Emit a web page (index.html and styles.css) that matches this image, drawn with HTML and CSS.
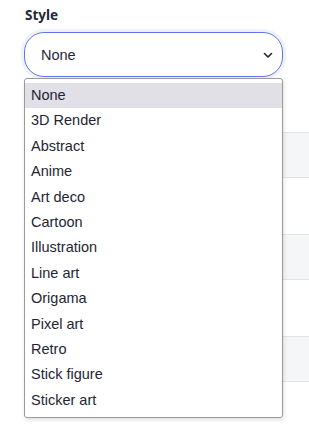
FILE: index.html
```html
<!DOCTYPE html>
<html>
<head>
<meta charset="utf-8">
<link rel="stylesheet" href="styles.css">
</head>
<body>
<div class="page">
  <label class="label">Style</label>
  <div class="field">
    <div class="select">
      <span class="value">None</span>
      <svg class="chev" width="10" height="7" viewBox="0 0 10 7"><path d="M1.5 1.5 L5 5 L8.5 1.5" fill="none" stroke="#1f2937" stroke-width="1.6" stroke-linecap="round" stroke-linejoin="round"/></svg>
    </div>
    <ul class="menu">
      <li class="opt active">None</li>
      <li class="opt">3D Render</li>
      <li class="opt">Abstract</li>
      <li class="opt">Anime</li>
      <li class="opt">Art deco</li>
      <li class="opt">Cartoon</li>
      <li class="opt">Illustration</li>
      <li class="opt">Line art</li>
      <li class="opt">Origama</li>
      <li class="opt">Pixel art</li>
      <li class="opt">Retro</li>
      <li class="opt">Stick figure</li>
      <li class="opt">Sticker art</li>
    </ul>
  </div>
  <div class="cards">
    <div class="card"></div>
    <div class="card"></div>
    <div class="card"></div>
  </div>
</div>
</body>
</html>
```
FILE: styles.css
```css
html, body {
  margin: 0;
  padding: 0;
  background: #ffffff;
}
.page {
  position: relative;
  box-sizing: border-box;
  min-height: 435px;
  padding: 6px 0 0 24px;
  font-family: "Liberation Sans", Arial, sans-serif;
}
.label {
  display: block;
  font-family: "Noto Sans", "Liberation Sans", sans-serif;
  font-weight: 700;
  font-size: 13.5px;
  line-height: 18px;
  color: #1f2937;
  padding-left: 1px;
}
.field {
  position: relative;
  z-index: 2;
  margin-top: 8px;
  width: 259px;
}
.select {
  box-sizing: border-box;
  height: 45px;
  border: 1px solid #6274e8;
  border-radius: 20px;
  box-shadow: 0 0 0 3px rgba(220, 226, 240, 0.45);
  display: flex;
  align-items: center;
  justify-content: space-between;
  padding: 0 9px 0 16px;
  background: #fff;
}
.value {
  font-size: 14.5px;
  color: #1f2937;
}
.chev {
  display: block;
  margin-top: 1px;
}
.menu {
  position: absolute;
  top: 46px;
  left: 0;
  z-index: 2;
  box-sizing: border-box;
  width: 259px;
  margin: 0;
  padding: 4px 0 4px 0;
  list-style: none;
  background: #fff;
  border: 1px solid #9a9a9a;
  border-radius: 3px;
  box-shadow: 1px 2px 4px rgba(0, 0, 0, 0.12);
}
.opt {
  height: 25.4px;
  line-height: 25.4px;
  padding-left: 6px;
  font-size: 14.5px;
  color: #1f2533;
}
.opt.active {
  background: #e1e0e6;
}
.cards {
  display: flex;
  flex-direction: column;
  gap: 56px;
  margin-top: 55px;
}
.card {
  height: 44px;
  background: #f5f6f8;
  border-top: 1px solid #e3e4e8;
  border-bottom: 1px solid #e3e4e8;
}
```
